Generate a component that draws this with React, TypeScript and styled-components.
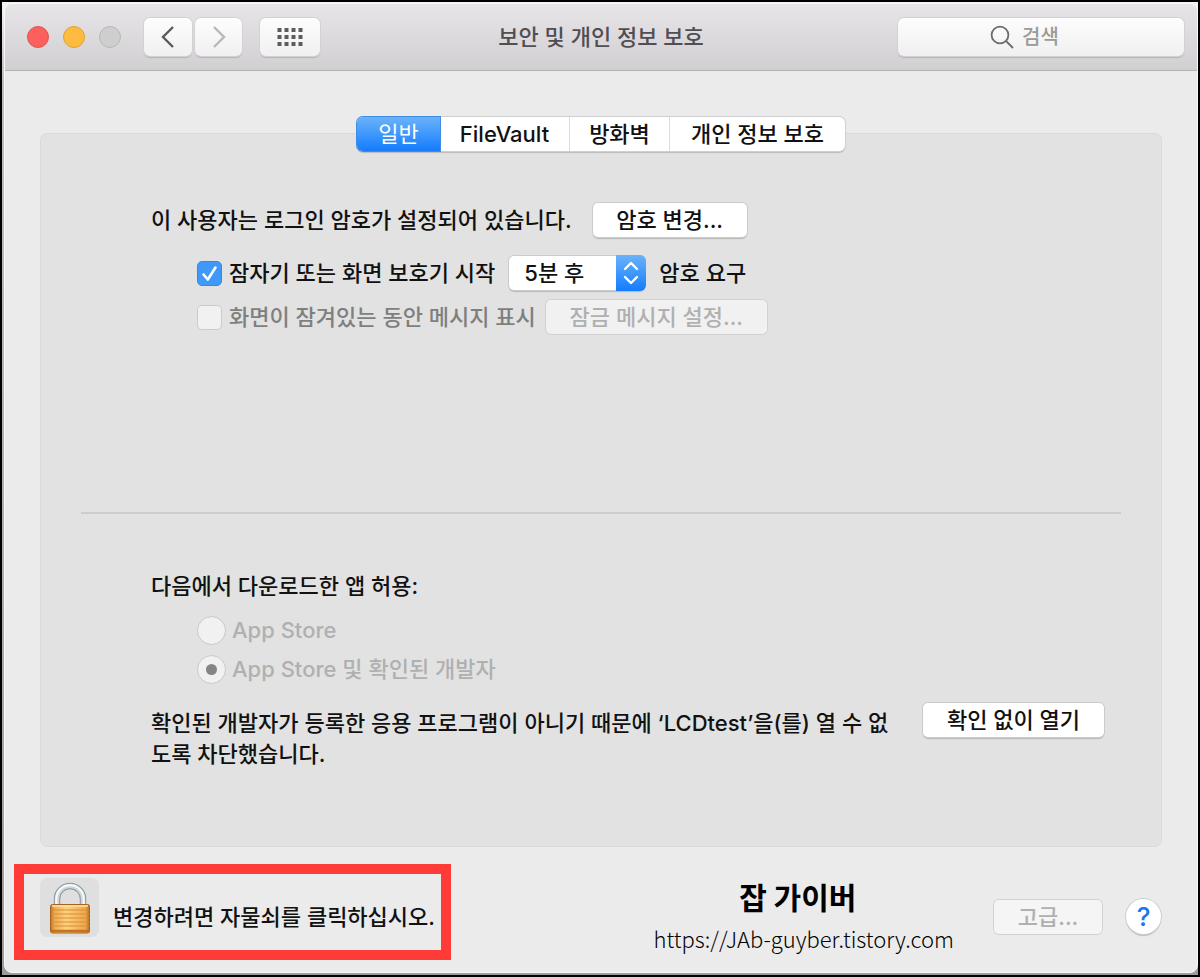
import React from "react";
import styled, { createGlobalStyle, css } from "styled-components";

const GlobalStyle = createGlobalStyle`
  *, *::before, *::after { box-sizing: border-box; }
  body { margin: 0; background: #000; }
  body, button, input, select {
    font-family: Inter, "Noto Sans CJK KR", sans-serif;
    font-size: 22px;
    font-weight: 500;
    color: #111;
  }
`;

const Frame = styled.div`
  display: flex;
  min-height: 100vh;
  padding: 2px;
  background: #000;
`;

const Desktop = styled.div`
  flex: 1;
  display: flex;
  padding: 1px 0 2px 2px;
  background: linear-gradient(#f4f4f4, #bdbdbd 80px, #9c9c9c);
`;

const Window = styled.main`
  flex: 1;
  display: flex;
  flex-direction: column;
  overflow: hidden;
  border: 1px solid #f8f8f8;
  border-radius: 8px;
  background: #ebebeb;
`;

const TitleBar = styled.header`
  display: grid;
  grid-template-columns: 1fr auto 1fr;
  align-items: center;
  height: 67px;
  padding: 0 13px;
  border-bottom: 1px solid #b3b1b3;
  background: linear-gradient(#e7e5e8, #d1cfd2);
`;

const Title = styled.h1`
  margin: 0;
  font-size: 22px;
  font-weight: 500;
  line-height: 32px;
  color: #504e52;
`;

const BarStart = styled.div`
  display: flex;
  align-items: center;
  padding-left: 9px;
`;

const Lights = styled.div`
  display: flex;
  gap: 14px;
  margin-right: 23px;
`;

const Light = styled.button<{ $fill: string; $edge: string }>`
  width: 22px;
  height: 22px;
  padding: 0;
  border: 1px solid ${(p) => p.$edge};
  border-radius: 50%;
  background: ${(p) => p.$fill};
`;

const barControl = css`
  height: 38px;
  border: 0;
  border-radius: 6px;
  background: linear-gradient(#fdfdfd, #f0f0f0);
  box-shadow: 0 0 0 1px #d3d1d4, 0 2px 1px #b4b2b5;
`;

const BarButton = styled.button<{ $width: number; $gap: number }>`
  ${barControl}
  display: grid;
  place-items: center;
  width: ${(p) => p.$width}px;
  margin-right: ${(p) => p.$gap}px;
  padding: 0;
`;

const Search = styled.label`
  ${barControl}
  justify-self: end;
  display: flex;
  align-items: center;
  gap: 8px;
  width: 286px;
  padding-left: 92px;
`;

const SearchInput = styled.input`
  flex: 1;
  min-width: 0;
  padding: 0;
  border: 0;
  outline: 0;
  background: none;
  font-size: 20px;
  &::placeholder { color: #9a9a9a; opacity: 1; }
`;

const Body = styled.div`
  flex: 1;
  display: flex;
  flex-direction: column;
  padding: 46px 35px 0;
`;

const Tabs = styled.nav`
  align-self: center;
  display: flex;
  z-index: 1;
  margin-bottom: -18px;
  border-radius: 6px;
  background: #fff;
  box-shadow: 0 0 0 1px #d0d0d0, 0 2px 1px #bbb;
`;

const Tab = styled.button<{ $width: number; $active?: boolean }>`
  width: ${(p) => p.$width}px;
  height: 34px;
  padding: 0;
  border: 0;
  border-right: 1px solid #dcdcdc;
  background: none;
  line-height: 32px;
  &:last-child { border-right: 0; }
  ${(p) =>
    p.$active &&
    css`
      border-right: 0;
      border-radius: 6px 0 0 6px;
      background: linear-gradient(#6ab3f9, #147cfe);
      box-shadow: 0 0 0 1px #3f8de6;
      font-weight: 400;
      color: #fff;
    `}
`;

const Panel = styled.section`
  flex: 1;
  display: flex;
  flex-direction: column;
  border: 1px solid #dadada;
  border-radius: 7px;
  background: #e2e2e2;
`;

const Section = styled.div<{ $top: number; $bottom: number }>`
  padding: ${(p) => p.$top}px 56px ${(p) => p.$bottom}px 110px;
`;

const Row = styled.div<{ $indent?: boolean; $gap: number; $bottom: number }>`
  display: flex;
  align-items: center;
  gap: ${(p) => p.$gap}px;
  margin-bottom: ${(p) => p.$bottom}px;
  padding-left: ${(p) => (p.$indent ? 46 : 0)}px;
  line-height: 32px;
  white-space: nowrap;
`;

const Option = styled.label<{ $color?: string; $gap?: number }>`
  display: flex;
  align-items: center;
  gap: ${(p) => p.$gap ?? 7}px;
  color: ${(p) => p.$color ?? "inherit"};
`;

const PushButton = styled.button<{ $width: number }>`
  flex: none;
  width: ${(p) => p.$width}px;
  height: 34px;
  margin: 1px;
  padding: 0;
  border: 0;
  border-radius: 5px;
  background: #fff;
  box-shadow: 0 0 0 1px #cbcbcb, 0 2px 1px #b8b8b8;
  line-height: 30px;
  &:disabled {
    background: rgba(255, 255, 255, 0.5);
    box-shadow: 0 0 0 1px #d2d2d2;
    color: #b0b0b0;
  }
`;

const Stack = styled.span`
  display: grid;
  align-items: center;
  & > * { grid-area: 1 / 1; }
  & > svg { pointer-events: none; justify-self: end; }
`;

const CheckBox = styled.input`
  appearance: none;
  width: 25px;
  height: 25px;
  margin: 0;
  border: 1px solid #cbcbcb;
  border-radius: 5px;
  background: #f1f1f1;
  &:checked {
    border-color: #3388ee;
    background: #3f99fb;
  }
`;

const Radio = styled.input`
  appearance: none;
  display: grid;
  place-items: center;
  width: 29px;
  height: 29px;
  margin: 0;
  border: 1px solid #c8c8c8;
  border-radius: 50%;
  background: #f1f1f1;
  &:checked::after {
    content: "";
    width: 11px;
    height: 11px;
    border-radius: 50%;
    background: #858585;
  }
`;

const Select = styled.select`
  appearance: none;
  width: 136px;
  height: 34px;
  margin: 1px;
  padding: 0 0 0 15px;
  border: 0;
  border-radius: 5px;
  background: #fff;
  box-shadow: 0 0 0 1px #cbcbcb, 0 2px 1px #b8b8b8;
`;

const Divider = styled.hr`
  width: calc(100% - 80px);
  height: 2px;
  margin: 0 auto;
  border: 0;
  background: #cdcdcd;
`;

const Label = styled.p`
  margin: 0 0 12px;
  line-height: 32px;
`;

const Notice = styled.div`
  display: flex;
  align-items: flex-start;
  gap: 24px;
`;

const NoticeText = styled.p`
  flex: 1;
  margin: 6px 0 0;
  line-height: 31px;
`;

const Footer = styled.footer`
  display: grid;
  grid-template-columns: auto 1fr auto;
  gap: 39px;
  align-items: start;
  padding: 17px 35px 12px 9px;
`;

const LockArea = styled.div`
  display: flex;
  align-items: flex-start;
  gap: 14px;
  width: 437px;
  height: 96px;
  padding: 4px 0 0 16px;
  border: 10px solid #ff3b38;
  white-space: nowrap;
`;

const LockButton = styled.button`
  display: grid;
  place-items: center;
  width: 59px;
  height: 59px;
  padding: 0;
  border: 0;
  border-radius: 7px;
  background: #dfdfdf;
`;

const LockText = styled.span`
  margin-top: 23px;
  line-height: 32px;
`;

const Credit = styled.div`
  justify-self: end;
  padding-top: 13px;
  text-align: center;
  color: #000;
`;

const CreditName = styled.strong`
  display: block;
  padding-right: 12px;
  font-family: "Noto Sans CJK KR", sans-serif;
  font-size: 30px;
  font-weight: 700;
  line-height: 38px;
`;

const CreditLink = styled.a`
  display: block;
  margin-top: 8px;
  font-family: "Noto Sans CJK KR", sans-serif;
  font-size: 22px;
  font-weight: 300;
  line-height: 30px;
  color: inherit;
  text-decoration: none;
`;

const FooterEnd = styled.div`
  display: flex;
  align-items: center;
  gap: 22px;
  padding-top: 34px;
`;

const HelpButton = styled.button`
  width: 35px;
  height: 35px;
  margin: 1px;
  padding: 0;
  border: 0;
  border-radius: 50%;
  background: #fff;
  box-shadow: 0 0 0 1px #cfcfcf, 0 2px 1px #bcbcbc;
  font-size: 26px;
  font-weight: 500;
  line-height: 34px;
  color: #1a78ee;
`;

const Chevron = ({ d, color }: { d: string; color: string }) => (
  <svg width="16" height="24" viewBox="0 0 16 24" fill="none" stroke={color} strokeWidth="2.4">
    <path d={d} />
  </svg>
);

const GridIcon = () => (
  <svg width="26" height="20" viewBox="0 0 26 20" fill="#5c5c5c">
    {[0, 7, 14].map((y) =>
      [0, 7, 14, 21].map((x) => <rect key={`${x}-${y}`} x={x + 0.5} y={y + 1} width="4" height="4" />)
    )}
  </svg>
);

const SearchIcon = () => (
  <svg width="24" height="24" viewBox="0 0 24 24" fill="none" stroke="#6c6c6c" strokeWidth="1.8">
    <circle cx="10" cy="10" r="8.4" />
    <path d="M16 16l7 7" />
  </svg>
);

const CheckIcon = () => (
  <svg width="25" height="25" viewBox="0 0 25 25" fill="none" stroke="#fff" strokeWidth="2.6" strokeLinecap="round" strokeLinejoin="round">
    <path d="M6.5 13.5l4.3 5L18.5 6.5" />
  </svg>
);

const SelectCap = () => (
  <svg width="30" height="36" viewBox="0 0 30 36" fill="none">
    <defs>
      <linearGradient id="cap" x1="0" y1="0" x2="0" y2="1">
        <stop offset="0" stopColor="#6ab3f9" />
        <stop offset="1" stopColor="#147cfe" />
      </linearGradient>
    </defs>
    <path d="M0 0H24a6 6 0 0 1 6 6V30a6 6 0 0 1-6 6H0z" fill="url(#cap)" />
    <path d="M9 14l6-6 6 6M9 22l6 6 6-6" stroke="#fff" strokeWidth="2.4" strokeLinecap="round" strokeLinejoin="round" />
  </svg>
);

const Padlock = () => (
  <svg width="42" height="52" viewBox="0 0 42 52">
    <defs>
      <linearGradient id="brass" x1="0" y1="0" x2="1" y2="0">
        <stop offset="0" stopColor="#b9722a" />
        <stop offset="0.1" stopColor="#efa94c" />
        <stop offset="0.4" stopColor="#ffd27f" />
        <stop offset="0.9" stopColor="#f0a648" />
        <stop offset="1" stopColor="#b06a24" />
      </linearGradient>
    </defs>
    <path d="M8 24V17a13 13 0 0 1 26 0V24" fill="none" stroke="#8d969b" strokeWidth="6.5" />
    <path d="M8 24V17a13 13 0 0 1 26 0V24" fill="none" stroke="#cdd6da" strokeWidth="4.5" />
    <path d="M7.3 24V17a13.7 13.7 0 0 1 27.4 0V24" fill="none" stroke="#f7fafb" strokeWidth="2" />
    <rect x="1.5" y="22.5" width="39" height="28.5" rx="2" fill="url(#brass)" stroke="#a8641f" />
    <path d="M3 24h36" stroke="#ffe3a6" strokeWidth="1.5" />
    <path d="M2 28h38M2 32h38M2 36h38M2 40h38M2 44h38" stroke="#d48f3c" strokeWidth="1.2" />
    <path d="M2 49h38" stroke="#c27426" strokeWidth="2.5" />
  </svg>
);

export default function App() {
  return (
    <Frame>
      <GlobalStyle />
      <Desktop>
        <Window>
          <TitleBar>
            <BarStart>
              <Lights>
                <Light aria-label="닫기" $fill="#fc605c" $edge="#e2524e" />
                <Light aria-label="최소화" $fill="#fdbc40" $edge="#e0a235" />
                <Light aria-label="확대" $fill="#cfcecf" $edge="#b9b8b9" />
              </Lights>
              <BarButton aria-label="뒤로" $width={48} $gap={3}>
                <Chevron color="#5a5a5a" d="M13 2L3 12l10 10" />
              </BarButton>
              <BarButton aria-label="앞으로" $width={47} $gap={18}>
                <Chevron color="#b8b8b8" d="M3 2l10 10L3 22" />
              </BarButton>
              <BarButton aria-label="모두 보기" $width={60} $gap={0}>
                <GridIcon />
              </BarButton>
            </BarStart>
            <Title>보안 및 개인 정보 보호</Title>
            <Search>
              <SearchIcon />
              <SearchInput type="text" placeholder="검색" aria-label="검색" />
            </Search>
          </TitleBar>

          <Body>
            <Tabs>
              <Tab $width={83} $active>일반</Tab>
              <Tab $width={130}>FileVault</Tab>
              <Tab $width={100}>방화벽</Tab>
              <Tab $width={175}>개인 정보 보호</Tab>
            </Tabs>
            <Panel>
              <Section $top={68} $bottom={177}>
                <Row $gap={20} $bottom={17}>
                  <span>이 사용자는 로그인 암호가 설정되어 있습니다.</span>
                  <PushButton $width={154}>암호 변경...</PushButton>
                </Row>
                <Row $indent $gap={13} $bottom={8}>
                  <Option>
                    <Stack>
                      <CheckBox type="checkbox" defaultChecked />
                      <CheckIcon />
                    </Stack>
                    잠자기 또는 화면 보호기 시작
                  </Option>
                  <Stack>
                    <Select aria-label="암호 요구 시간" defaultValue="5">
                      <option value="5">5분 후</option>
                    </Select>
                    <SelectCap />
                  </Stack>
                  <span>암호 요구</span>
                </Row>
                <Row $indent $gap={9} $bottom={0}>
                  <Option $color="#7f7f7f">
                    <CheckBox type="checkbox" disabled />
                    화면이 잠겨있는 동안 메시지 표시
                  </Option>
                  <PushButton $width={221} disabled>잠금 메시지 설정...</PushButton>
                </Row>
              </Section>
              <Divider />
              <Section $top={56} $bottom={73}>
                <Label>다음에서 다운로드한 앱 허용:</Label>
                <Row $indent $gap={0} $bottom={7}>
                  <Option $color="#b0b0b0" $gap={6}>
                    <Radio type="radio" name="source" disabled />
                    App Store
                  </Option>
                </Row>
                <Row $indent $gap={0} $bottom={17}>
                  <Option $color="#b0b0b0" $gap={6}>
                    <Radio type="radio" name="source" defaultChecked disabled />
                    App Store 및 확인된 개발자
                  </Option>
                </Row>
                <Notice>
                  <NoticeText>
                    확인된 개발자가 등록한 응용 프로그램이 아니기 때문에 ‘LCDtest’을(를) 열 수 없도록 차단했습니다.
                  </NoticeText>
                  <PushButton $width={181}>확인 없이 열기</PushButton>
                </Notice>
              </Section>
            </Panel>
          </Body>

          <Footer>
            <LockArea>
              <LockButton aria-label="잠금 해제">
                <Padlock />
              </LockButton>
              <LockText>변경하려면 자물쇠를 클릭하십시오.</LockText>
            </LockArea>
            <Credit>
              <CreditName>잡 가이버</CreditName>
              <CreditLink href="https://JAb-guyber.tistory.com">https://JAb-guyber.tistory.com</CreditLink>
            </Credit>
            <FooterEnd>
              <PushButton $width={108} disabled>고급...</PushButton>
              <HelpButton aria-label="도움말">?</HelpButton>
            </FooterEnd>
          </Footer>
        </Window>
      </Desktop>
    </Frame>
  );
}
